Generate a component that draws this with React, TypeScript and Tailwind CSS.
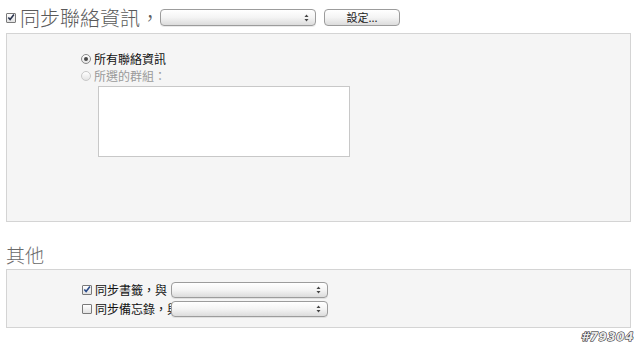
import React from "react";

const font = { fontFamily: '"Noto Sans CJK TC", "Noto Sans", sans-serif' };

const Arrows = () => (
  <svg width="5" height="8" viewBox="0 0 5 8" className="shrink-0">
    <path d="M2.5 0.5 L4.5 3 L0.5 3 Z" fill="#444" />
    <path d="M2.5 7.5 L4.5 5 L0.5 5 Z" fill="#444" />
  </svg>
);

const Select = ({ width, height = 16 }: { width: number; height?: number }) => (
  <div
    className="relative z-10 flex items-center justify-end pr-[6px] rounded-[4px] border border-[#9c9c9c] bg-gradient-to-b from-white via-[#f4f4f4] to-[#dcdcdc] shadow-[0_1px_0_rgba(0,0,0,0.08)]"
    style={{ width, height }}
  >
    <Arrows />
  </div>
);

const CheckBox = ({ checked, color = "#26395c" }: { checked: boolean; color?: string }) => (
  <div className="w-[10px] h-[10px] shrink-0 border border-[#7a7a7a] bg-gradient-to-b from-white to-[#e2e2e2] rounded-[1px] flex items-center justify-center">
    {checked && (
      <svg width="9" height="9" viewBox="0 0 9 9">
        <path d="M1.5 4.5 L3.5 6.8 L7.8 1.2" fill="none" stroke={color} strokeWidth="1.8" />
      </svg>
    )}
  </div>
);

const Radio = ({ selected }: { selected: boolean }) => (
  <div
    className={
      "w-[10px] h-[10px] shrink-0 rounded-full border flex items-center justify-center bg-gradient-to-b from-white to-[#e4e4e4] " +
      (selected ? "border-[#8a8a8a]" : "border-[#c8c8c8]")
    }
  >
    {selected && <div className="w-[4px] h-[4px] rounded-full bg-[#4a4a4a]" />}
  </div>
);

export default function App() {
  return (
    <div className="w-[640px] h-[354px] bg-white relative overflow-hidden" style={font}>
      {/* top row */}
      <div className="flex items-center pl-[6px] pt-[8px] h-[27px]">
        <CheckBox checked={true} color="#2b3550" />
        <span className="ml-[4px] text-[20px] leading-[20px] font-light text-[#5a5a5a] whitespace-nowrap">同步聯絡資訊，</span>
        <Select width={156} height={17} />
        <button className="ml-[8px] w-[76px] h-[17px] rounded-[4px] border border-[#9c9c9c] bg-gradient-to-b from-white via-[#f4f4f4] to-[#dcdcdc] text-[11px] leading-[15px] text-[#222] flex items-center justify-center">
          設定...
        </button>
      </div>

      {/* contacts panel */}
      <div className="ml-[6px] mt-[6px] w-[625px] h-[189px] bg-[#f5f5f5] border border-[#d4d4d4] pl-[74px] pt-[16px]">
        <div className="flex items-center h-[17px] gap-[3px]">
          <Radio selected={true} />
          <span className="text-[12px] leading-[17px] text-[#111]">所有聯絡資訊</span>
        </div>
        <div className="flex items-center h-[17px] gap-[3px]">
          <Radio selected={false} />
          <span className="text-[12px] leading-[17px] text-[#9a9a9a]">所選的群組：</span>
        </div>
        <div className="ml-[17px] mt-[2px] w-[252px] h-[71px] bg-white border border-[#c8c8c8]" />
      </div>

      {/* other heading */}
      <div className="pl-[6px] mt-[23px] text-[19px] leading-[20px] font-light text-[#6a6a6a]">其他</div>

      {/* other panel */}
      <div className="ml-[6px] mt-[4px] w-[625px] h-[59px] bg-[#f5f5f5] border border-[#d4d4d4] pl-[75px] pt-[10px]">
        <div className="flex items-center h-[19px]">
          <CheckBox checked={true} color="#2a4b8a" />
          <span className="ml-[3px] w-[76px] text-[12px] leading-[17px] text-[#111] whitespace-nowrap">同步書籤，與</span>
          <Select width={157} />
        </div>
        <div className="flex items-center h-[19px]">
          <CheckBox checked={false} />
          <span className="ml-[3px] w-[76px] text-[12px] leading-[17px] text-[#111] whitespace-nowrap">同步備忘錄，與</span>
          <Select width={157} />
        </div>
      </div>

      {/* watermark */}
      <div
        className="absolute right-[6px] bottom-[8px] text-[12px] font-bold italic text-[#e8e8e8] tracking-[0.5px]"
        style={{ fontFamily: '"DejaVu Sans", sans-serif', WebkitTextStroke: "1px #111", paintOrder: "stroke fill" }}
      >
        #79304
      </div>
    </div>
  );
}
